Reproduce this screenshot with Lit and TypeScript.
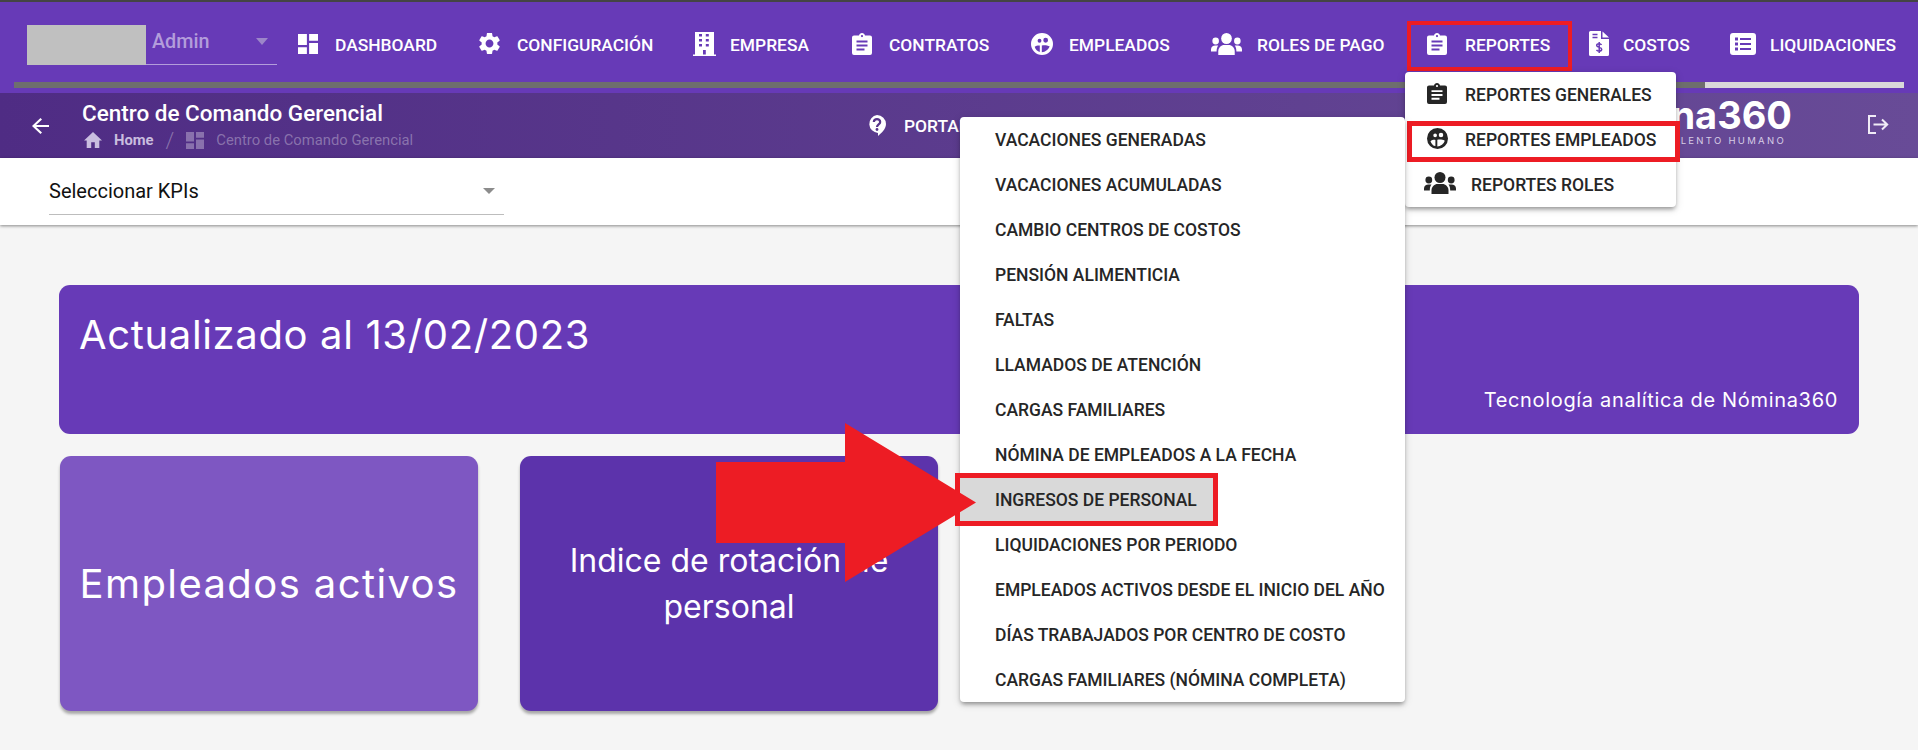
import { LitElement, html, css, svg } from "lit";
import { customElement } from "lit/decorators.js";

const shapes: Record<string, { box: string; body: unknown }> = {
  dashboard: {
    box: "3 3 18 18",
    body: svg`<path d="M3 13h8V3H3v10zm0 8h8v-6H3v6zm10 0h8V11h-8v10zm0-18v6h8V3h-8z"/>`,
  },
  gear: {
    box: "2.4 2.4 19.2 19.2",
    body: svg`<path d="M19.14,12.94c0.04-0.3,0.06-0.61,0.06-0.94c0-0.32-0.02-0.64-0.07-0.94l2.03-1.58c0.18-0.14,0.23-0.41,0.12-0.61 l-1.92-3.32c-0.12-0.22-0.37-0.29-0.59-0.22l-2.39,0.96c-0.5-0.38-1.03-0.7-1.62-0.94L14.4,2.81c-0.04-0.24-0.24-0.41-0.48-0.41 h-3.84c-0.24,0-0.43,0.17-0.47,0.41L9.25,5.35C8.66,5.59,8.12,5.92,7.63,6.29L5.24,5.33c-0.22-0.08-0.47,0-0.59,0.22L2.74,8.87 C2.62,9.08,2.66,9.34,2.86,9.48l2.03,1.58C4.84,11.36,4.8,11.69,4.8,12s0.02,0.64,0.07,0.94l-2.03,1.58 c-0.18,0.14-0.23,0.41-0.12,0.61l1.92,3.32c0.12,0.22,0.37,0.29,0.59,0.22l2.39-0.96c0.5,0.38,1.03,0.7,1.62,0.94l0.36,2.54 c0.05,0.24,0.24,0.41,0.48,0.41h3.84c0.24,0,0.44-0.17,0.47-0.41l0.36-2.54c0.59-0.24,1.13-0.56,1.62-0.94l2.39,0.96 c0.22,0.08,0.47,0,0.59-0.22l1.92-3.32c0.12-0.22,0.07-0.47-0.12-0.61L19.14,12.94z M12,15.6c-1.98,0-3.6-1.62-3.6-3.6 s1.62-3.6,3.6-3.6s3.6,1.62,3.6,3.6S13.98,15.6,12,15.6z"/>`,
  },
  building: {
    box: "0 0 23 24",
    body: svg`<path fill-rule="evenodd" d="M2 0h19v22.5h2V24H0v-1.5h2zM6 2v2.5h3V2zM12.8 2v2.5h3V2zM6 7v2.5h3V7zM12.8 7v2.5h3V7zM6 12v2.5h3V12zM12.8 12v2.5h3V12zM10 18v4.5h2.8V18z"/>`,
  },
  clipboard: {
    box: "0 0 20 22",
    body: svg`<path fill-rule="evenodd" d="M2 2.5h5C7.3 1 8.5 0 10 0s2.700 1 3 2.500h5a2 2 0 0 1 2 2V20a2 2 0 0 1-2 2H2a2 2 0 0 1-2-2V4.500a2 2 0 0 1 2-2zM10 2a1.100 1.100 0 1 0 0 2.200A1.100 1.100 0 0 0 10 2zM4.500 7.500v2h11v-2zM4.500 11.500v2h11v-2zM4.500 15.500v2h8v-2z"/>`,
  },
  person: {
    box: "0 0 24 24",
    body: svg`<path fill-rule="evenodd" d="M12 0a12 12 0 1 1 0 24a12 12 0 0 1 0-24zM9.300 6.300a2.100 2.100 0 1 0 0 4.200a2.100 2.100 0 0 0 0-4.200zM16 5.300a2.600 2.600 0 1 0 0 5.200a2.600 2.600 0 0 0 0-5.200zM4 15C5.500 13.800 7.500 13.400 9.600 13.600V20.700C7 20.200 5 18 4 15zM11.800 13.500C14.500 13 17.800 13.200 20.300 14.500C19.200 18 15.800 20.800 11.800 21z"/>`,
  },
  people: {
    box: "0 0 32 22",
    body: svg`<circle cx="16" cy="5.500" r="5.500"/><circle cx="4.800" cy="8" r="3.400"/><circle cx="27.200" cy="8" r="3.400"/><path d="M7.500 22v-3.500c0-4 3.200-6.500 6-6.500h5c2.800 0 6 2.500 6 6.500V22a0 0 0 0 1 0 0z"/><path d="M0 18.500v-2c0-2.500 2-4 4.500-4h3C6.200 14 5.800 16 5.800 18.500zM32 18.500v-2c0-2.500-2-4-4.500-4h-3c1.300 1.500 1.700 3.500 1.700 6z"/>`,
  },
  invoice: {
    box: "0 0 20 25",
    body: svg`<path d="M1.500 0H12v8h8v15.500a1.500 1.500 0 0 1-1.500 1.500h-17A1.500 1.500 0 0 1 0 23.500v-22A1.500 1.500 0 0 1 1.500 0z"/><path d="M13.500 0.500L20 6.500h-6.500z"/><path fill="none" stroke="#673ab7" stroke-width="1.500" d="M3.500 3.500h5M3.500 6.500h5M12.500 14c-.4-.9-1.300-1.300-2.400-1.300c-1.400 0-2.400.7-2.400 1.800c0 2.500 5 1.200 5 3.800c0 1.200-1.100 1.800-2.500 1.800c-1.300 0-2.200-.5-2.700-1.300M10.200 11v11"/>`,
  },
  list: {
    box: "0 0 26 22",
    body: svg`<path fill-rule="evenodd" d="M3 0h20a3 3 0 0 1 3 3v16a3 3 0 0 1-3 3H3a3 3 0 0 1-3-3V3a3 3 0 0 1 3-3zM5 4.500v3h3v-3zM10 5v2h11V5zM5 9.500v3h3v-3zM10 10v2h11v-2zM5 14.500v3h3v-3zM10 15v2h11v-2z"/>`,
  },
  help: {
    box: "0 0 18 21",
    body: svg`<path d="M9 0a9 9 0 0 1 9 9c0 5-4.500 9-8 12v-3.100A9 9 0 0 1 9 0z"/><path fill="none" stroke="#57338a" stroke-width="2.200" d="M5.800 7c.2-1.800 1.500-2.800 3.200-2.800c1.800 0 3.200 1.100 3.200 2.700c0 2.400-3.200 2.500-3.200 5"/><circle cx="9" cy="14.500" r="1.400" fill="#57338a"/>`,
  },
  logout: {
    box: "0 0 22 19",
    body: svg`<path fill="none" stroke="currentColor" stroke-width="2" d="M9 1H2v17h7M6.500 9.500H20M15 4.500l5.200 5l-5.200 5"/>`,
  },
  home: {
    box: "2 3 20 17",
    body: svg`<path d="M10 20v-6h4v6h5v-8h3L12 3 2 12h3v8z"/>`,
  },
  back: {
    box: "4 4 16 16",
    body: svg`<path d="M20 11H7.830l5.590-5.590L12 4l-8 8 8 8 1.410-1.410L7.830 13H20v-2z"/>`,
  },
};

const icon = (name: string, w: number, h: number) => html`
  <svg width=${w} height=${h} viewBox=${shapes[name].box} fill="currentColor" preserveAspectRatio="none">${shapes[name].body}</svg>
`;

const navItems = [
  { label: "Dashboard", icon: "dashboard", w: 20, h: 20, slot: 37, width: 181 },
  { label: "Configuración", icon: "gear", w: 21, h: 21, slot: 38, width: 214 },
  { label: "Empresa", icon: "building", w: 23, h: 24, slot: 37, width: 159 },
  { label: "Contratos", icon: "clipboard", w: 20, h: 22, slot: 37, width: 179 },
  { label: "Empleados", icon: "person", w: 22, h: 22, slot: 38, width: 180 },
  { label: "Roles de pago", icon: "people", w: 31, h: 22, slot: 46, width: 216 },
  { label: "Reportes", icon: "clipboard", w: 20, h: 22, slot: 38, width: 162 },
  { label: "Costos", icon: "invoice", w: 20, h: 25, slot: 34, width: 141 },
  { label: "Liquidaciones", icon: "list", w: 26, h: 22, slot: 40, width: 180 },
];

const reportItems = [
  "VACACIONES GENERADAS",
  "VACACIONES ACUMULADAS",
  "CAMBIO CENTROS DE COSTOS",
  "PENSIÓN ALIMENTICIA",
  "FALTAS",
  "LLAMADOS DE ATENCIÓN",
  "CARGAS FAMILIARES",
  "NÓMINA DE EMPLEADOS A LA FECHA",
  "INGRESOS DE PERSONAL",
  "LIQUIDACIONES POR PERIODO",
  "EMPLEADOS ACTIVOS DESDE EL INICIO DEL AÑO",
  "DÍAS TRABAJADOS POR CENTRO DE COSTO",
  "CARGAS FAMILIARES (NÓMINA COMPLETA)",
];

@customElement("app-root")
export class AppRoot extends LitElement {
  static styles = css`
    * {
      box-sizing: border-box;
    }

    :host {
      display: block;
      position: relative;
      width: 1918px;
      height: 750px;
      overflow: hidden;
      background: #f5f5f5;
      font-family: Roboto, "Liberation Sans", sans-serif;
    }

    svg {
      display: block;
      flex: none;
    }

    .toolbar {
      height: 93px;
      border-top: 2px solid #444;
      background: #673ab7;
      padding-top: 18px;
    }

    .nav {
      display: flex;
      align-items: center;
      height: 50px;
    }

    .user {
      display: flex;
      align-self: flex-start;
      width: 250px;
      height: 40px;
      margin: 5px 21px 0 27px;
      border-bottom: 1px solid rgba(255, 255, 255, 0.5);
    }

    .redacted {
      width: 119px;
      height: 40px;
      background: #c0c0c0;
    }

    .user-name {
      flex: 1;
      padding: 4px 0 0 6px;
      color: #b39ddb;
      font-size: 19.8px;
      font-weight: 500;
      line-height: 26px;
    }

    .user-arrow {
      width: 0;
      height: 0;
      margin: 13px 9px 0 0;
      border: 6.5px solid transparent;
      border-top: 7px solid #9c86c9;
      border-bottom: 0;
    }

    .nav-item {
      position: relative;
      display: flex;
      align-items: center;
      height: 50px;
      color: #fff;
      font-size: 17.4px;
      font-weight: 500;
      text-transform: uppercase;
      white-space: nowrap;
      flex: none;
    }

    .nav-icon {
      flex: none;
      margin-top: -3px;
    }

    .red-top {
      position: absolute;
      left: -20px;
      top: 1px;
      width: 165px;
      height: 50px;
      border: 4px solid #ed1c24;
    }

    .track {
      height: 6px;
      margin: 12px 14px 0;
      background: #6e6e6e;
    }

    .ink {
      width: 199px;
      height: 6px;
      margin-left: 1691px;
      background: #d9d9d9;
    }

    .subheader {
      display: flex;
      align-items: center;
      height: 65px;
      padding-left: 32px;
      background: linear-gradient(90deg, #4f2c84, #684b97);
      color: #fff;
    }

    .back {
      margin-right: 33px;
    }

    .heading {
      width: 786px;
      flex: none;
    }

    .title {
      font-size: 22.5px;
      font-weight: 500;
      line-height: 28px;
      margin-top: -3px;
    }

    .crumbs {
      display: flex;
      align-items: center;
      gap: 12px;
      height: 18px;
      margin: 4px 0 0 2px;
      font-size: 14.8px;
      color: rgba(255, 255, 255, 0.32);
    }

    .crumb-home {
      display: flex;
      align-items: center;
      gap: 12px;
      color: #c9bddf;
      font-weight: 700;
    }

    .slash {
      font-size: 22px;
      font-weight: 300;
    }

    .portal {
      display: flex;
      align-items: center;
      gap: 18px;
      font-size: 17.4px;
      font-weight: 500;
      white-space: nowrap;
    }

    .brand {
      display: flex;
      flex-direction: column;
      align-items: flex-end;
      margin-left: auto;
      margin-right: 75px;
    }

    .brand-name {
      font-family: Inter, sans-serif;
      font-size: 38px;
      font-weight: 700;
      line-height: 40px;
      margin-top: -8px;
    }

    .brand-sub {
      margin: -1px 6px 0 0;
      font-family: Inter, sans-serif;
      font-size: 9.5px;
      letter-spacing: 2.3px;
      line-height: 14px;
      color: #d7cde6;
    }

    .logout {
      margin-right: 29px;
      margin-top: -3px;
      color: #f0ecf6;
    }

    .filters {
      position: relative;
      z-index: 1;
      height: 67px;
      padding: 16px 0 0 49px;
      background: #fff;
      box-shadow: 0 1px 3px rgba(0, 0, 0, 0.45);
    }

    .kpi {
      display: flex;
      align-items: center;
      justify-content: space-between;
      width: 455px;
      height: 41px;
      padding: 0 9px 6px 0;
      border-bottom: 1px solid #bdbdbd;
      color: #111;
      font-size: 20px;
    }

    .kpi-arrow {
      width: 0;
      height: 0;
      border: 6px solid transparent;
      border-top: 6.5px solid #8c8c8c;
      border-bottom: 0;
    }

    .content {
      padding: 60px 59px 0;
      font-family: Inter, sans-serif;
      color: #fff;
    }

    .banner {
      display: flex;
      flex-direction: column;
      justify-content: space-between;
      width: 1800px;
      height: 149px;
      padding: 27px 21px 21px 20px;
      border-radius: 11px;
      background: #673ab7;
    }

    .banner-title {
      font-size: 40px;
      line-height: 46px;
      letter-spacing: 0.65px;
    }

    .banner-note {
      align-self: flex-end;
      font-size: 20px;
      line-height: 26px;
      letter-spacing: 0.67px;
    }

    .cards {
      display: flex;
      gap: 42px;
      margin: 22px 0 0 1px;
    }

    .card {
      display: flex;
      align-items: center;
      justify-content: center;
      width: 418px;
      height: 255px;
      border-radius: 11px;
      text-align: center;
      box-shadow: 0 3px 3px rgba(0, 0, 0, 0.32);
    }

    .card-light {
      background: #7e57c2;
      font-size: 40px;
      letter-spacing: 1.4px;
    }

    .card-dark {
      padding: 0 40px;
      background: #5c33ab;
      font-size: 32px;
      line-height: 46px;
    }

    .menu {
      position: absolute;
      z-index: 5;
      border-radius: 4px;
      background: #fff;
      color: #262626;
      font-size: 17.5px;
      font-weight: 500;
      box-shadow: 0 3px 4px -1px rgba(0, 0, 0, 0.35), 0 2px 8px rgba(0, 0, 0, 0.15);
    }

    .menu-row {
      position: relative;
      display: flex;
      align-items: center;
      height: 45px;
      white-space: nowrap;
    }

    .menu-row span {
      position: relative;
    }

    .reports {
      left: 960px;
      top: 117px;
      width: 445px;
    }

    .reports .menu-row {
      padding-left: 35px;
    }

    .picked {
      position: absolute;
      left: -5px;
      top: -4px;
      width: 263px;
      height: 53px;
      border: 5px solid #ed1c24;
      background: #d9d9d9;
    }

    .subreports {
      left: 1405px;
      top: 72px;
      width: 271px;
    }

    .subreports .menu-row {
      padding-left: 22px;
    }

    .sub-icon {
      display: flex;
      justify-content: flex-start;
      width: 38px;
      flex: none;
      margin-top: -3px;
    }

    .sub-wide {
      width: 47px;
      margin-left: -3px;
    }

    .red-row {
      position: absolute;
      left: 2px;
      top: 4px;
      width: 273px;
      height: 41px;
      border: 5px solid #ed1c24;
    }

    .arrow {
      position: absolute;
      z-index: 6;
      left: 716px;
      top: 423px;
    }
  `;

  render() {
    return html`
      <header class="toolbar">
        <nav class="nav">
          <div class="user">
            <div class="redacted"></div>
            <div class="user-name">Admin</div>
            <div class="user-arrow"></div>
          </div>
          ${navItems.map(
            (item) => html`
              <div class="nav-item" style="width:${item.width}px">
                <div class="nav-icon" style="width:${item.slot}px">${icon(item.icon, item.w, item.h)}</div>
                ${item.label}
                ${item.label === "Reportes" ? html`<div class="red-top"></div>` : ""}
              </div>
            `
          )}
        </nav>
        <div class="track"><div class="ink"></div></div>
      </header>

      <section class="subheader">
        <div class="back">${icon("back", 17, 16)}</div>
        <div class="heading">
          <div class="title">Centro de Comando Gerencial</div>
          <div class="crumbs">
            <div class="crumb-home">${icon("home", 18, 16)} Home</div>
            <span class="slash">/</span>
            ${icon("dashboard", 18, 17)}
            <span>Centro de Comando Gerencial</span>
          </div>
        </div>
        <div class="portal">${icon("help", 18, 21)} PORTAL DE AYUDA</div>
        <div class="brand">
          <div class="brand-name">Nómina360</div>
          <div class="brand-sub">TALENTO HUMANO</div>
        </div>
        <div class="logout">${icon("logout", 22, 19)}</div>
      </section>

      <section class="filters">
        <div class="kpi">Seleccionar KPIs <div class="kpi-arrow"></div></div>
      </section>

      <main class="content">
        <div class="banner">
          <div class="banner-title">Actualizado al 13/02/2023</div>
          <div class="banner-note">Tecnología analítica de Nómina360</div>
        </div>
        <div class="cards">
          <div class="card card-light">Empleados activos</div>
          <div class="card card-dark">Indice de rotación de personal</div>
        </div>
      </main>

      <div class="menu subreports">
        <div class="menu-row">
          <div class="sub-icon">${icon("clipboard", 20, 21)}</div>
          <span>REPORTES GENERALES</span>
        </div>
        <div class="menu-row">
          <div class="sub-icon">${icon("person", 21, 21)}</div>
          <span>REPORTES EMPLEADOS</span>
          <div class="red-row"></div>
        </div>
        <div class="menu-row">
          <div class="sub-icon sub-wide">${icon("people", 32, 22)}</div>
          <span>REPORTES ROLES</span>
        </div>
      </div>

      <div class="menu reports">
        ${reportItems.map(
          (label) => html`
            <div class="menu-row">
              ${label === "INGRESOS DE PERSONAL" ? html`<div class="picked"></div>` : ""}
              <span>${label}</span>
            </div>
          `
        )}
      </div>

      <svg class="arrow" width="260" height="159" viewBox="0 0 260 159">
        <polygon points="0,39 129,39 129,0 260,79.5 129,159 129,120 0,120" fill="#ed1c24"></polygon>
      </svg>
    `;
  }
}
